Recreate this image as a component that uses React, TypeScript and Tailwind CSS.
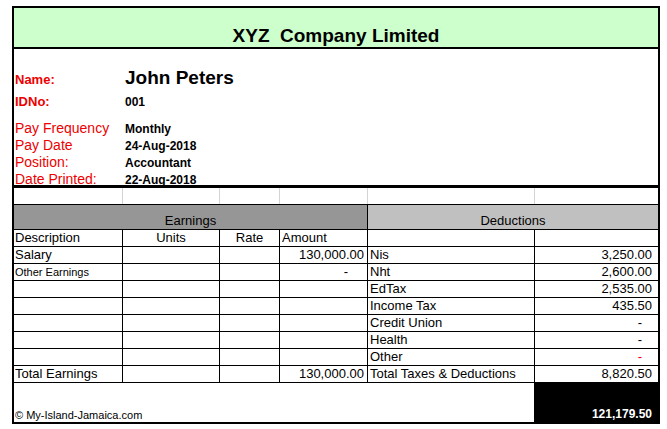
const cols = ['w-[109px]', 'w-[97px]', 'w-[60px]', 'w-[88px]', 'w-[167px]', 'w-[123px]'];

type Row = {
  desc: string;
  small?: boolean;
  units?: string;
  rate?: string;
  amount?: string;
  head?: boolean;
  dLabel?: string;
  dAmount?: string;
  redDash?: boolean;
};

const rows: Row[] = [
  { desc: 'Description', units: 'Units', rate: 'Rate', amount: 'Amount', head: true },
  { desc: 'Salary', amount: '130,000.00', dLabel: 'Nis', dAmount: '3,250.00' },
  { desc: 'Other Earnings', small: true, amount: '-', dLabel: 'Nht', dAmount: '2,600.00' },
  { desc: '', dLabel: 'EdTax', dAmount: '2,535.00' },
  { desc: '', dLabel: 'Income Tax', dAmount: '435.50' },
  { desc: '', dLabel: 'Credit Union', dAmount: '-' },
  { desc: '', dLabel: 'Health', dAmount: '-' },
  { desc: '', dLabel: 'Other', dAmount: '-', redDash: true },
  { desc: 'Total Earnings', amount: '130,000.00', dLabel: 'Total Taxes & Deductions', dAmount: '8,820.50' },
];

function InfoRow({ label, value, bold, big, className = '' }: { label: string; value: string; bold?: boolean; big?: boolean; className?: string }) {
  return (
    <div className={`grid grid-cols-[111px_1fr] items-baseline ${className}`}>
      <span className={`pl-px text-[#ee0000] ${bold ? 'text-[13px] font-bold' : 'text-[14px]'}`}>{label}</span>
      <span className={`font-bold ${big ? 'text-[19px]' : 'text-[12px]'}`}>{value}</span>
    </div>
  );
}

export default function App() {
  return (
    <div className="min-h-screen bg-white pl-[12px] pt-[6px] font-['Liberation_Sans',Arial,sans-serif] text-black">
      <div className="w-[648px] border-2 border-black">
        {/* title */}
        <div className="flex h-[41px] items-end justify-center border-b-2 border-black bg-[#ccffcc]">
          <span className="whitespace-pre text-[19px] font-bold leading-[22px]">XYZ  Company Limited</span>
        </div>

        {/* employee info */}
        <div className="h-[139px] border-b-[3px] border-black pt-[16px]">
          <InfoRow label="Name:" value="John Peters" bold big className="h-[26px] leading-[26px]" />
          <InfoRow label="IDNo:" value="001" bold className="h-[22px] leading-[22px]" />
          <InfoRow label="Pay Frequency" value="Monthly" className="mt-[7px] h-[17px] leading-[17px]" />
          <InfoRow label="Pay Date" value="24-Aug-2018" className="h-[17px] leading-[17px]" />
          <InfoRow label="Position:" value="Accountant" className="h-[17px] leading-[17px]" />
          <InfoRow label="Date Printed:" value="22-Aug-2018" className="h-[17px] leading-[17px]" />
        </div>

        {/* empty spreadsheet row */}
        <div className="flex h-[17px] border-b border-black">
          {cols.map((c, i) => (
            <div key={i} className={`${c} ${i < 5 ? 'border-r border-[#d4d4d4]' : ''}`} />
          ))}
        </div>

        {/* section headers */}
        <div className="flex h-[25px] border-b border-black text-[13px] leading-[16px]">
          <div className="flex w-[354px] items-end justify-center border-r border-black bg-[#969696]">Earnings</div>
          <div className="flex w-[290px] items-end justify-center bg-[#c0c0c0]">Deductions</div>
        </div>

        {/* table rows */}
        {rows.map((r, i) => (
          <div key={i} className="flex h-[17px] border-b border-black text-[13px] leading-[16px]">
            <div className={`${cols[0]} truncate border-r border-black pl-px ${r.small ? 'text-[11px]' : ''}`}>{r.desc}</div>
            <div className={`${cols[1]} border-r border-black text-center`}>{r.units}</div>
            <div className={`${cols[2]} border-r border-black text-center`}>{r.rate}</div>
            <div
              className={`${cols[3]} border-r border-black ${
                r.head ? 'pl-[2px] text-left' : r.amount === '-' ? 'pr-[19px] text-right' : 'pr-[3px] text-right'
              }`}
            >
              {r.amount}
            </div>
            <div className={`${cols[4]} whitespace-nowrap border-r border-black pl-[2px]`}>{r.dLabel}</div>
            <div
              className={`${cols[5]} text-right ${r.dAmount === '-' ? 'pr-[16px]' : 'pr-[6px]'} ${
                r.redDash ? 'text-[#ee0000]' : ''
              }`}
            >
              {r.dAmount}
            </div>
          </div>
        ))}

        {/* footer */}
        <div className="flex h-[39px]">
          <div className="flex w-[520px] items-end pl-px text-[11px] leading-[14px]">© My-Island-Jamaica.com</div>
          <div className="flex w-[124px] items-end justify-end bg-black pr-[6px] text-[12px] font-bold leading-[15px] text-white">
            121,179.50
          </div>
        </div>
      </div>
    </div>
  );
}
